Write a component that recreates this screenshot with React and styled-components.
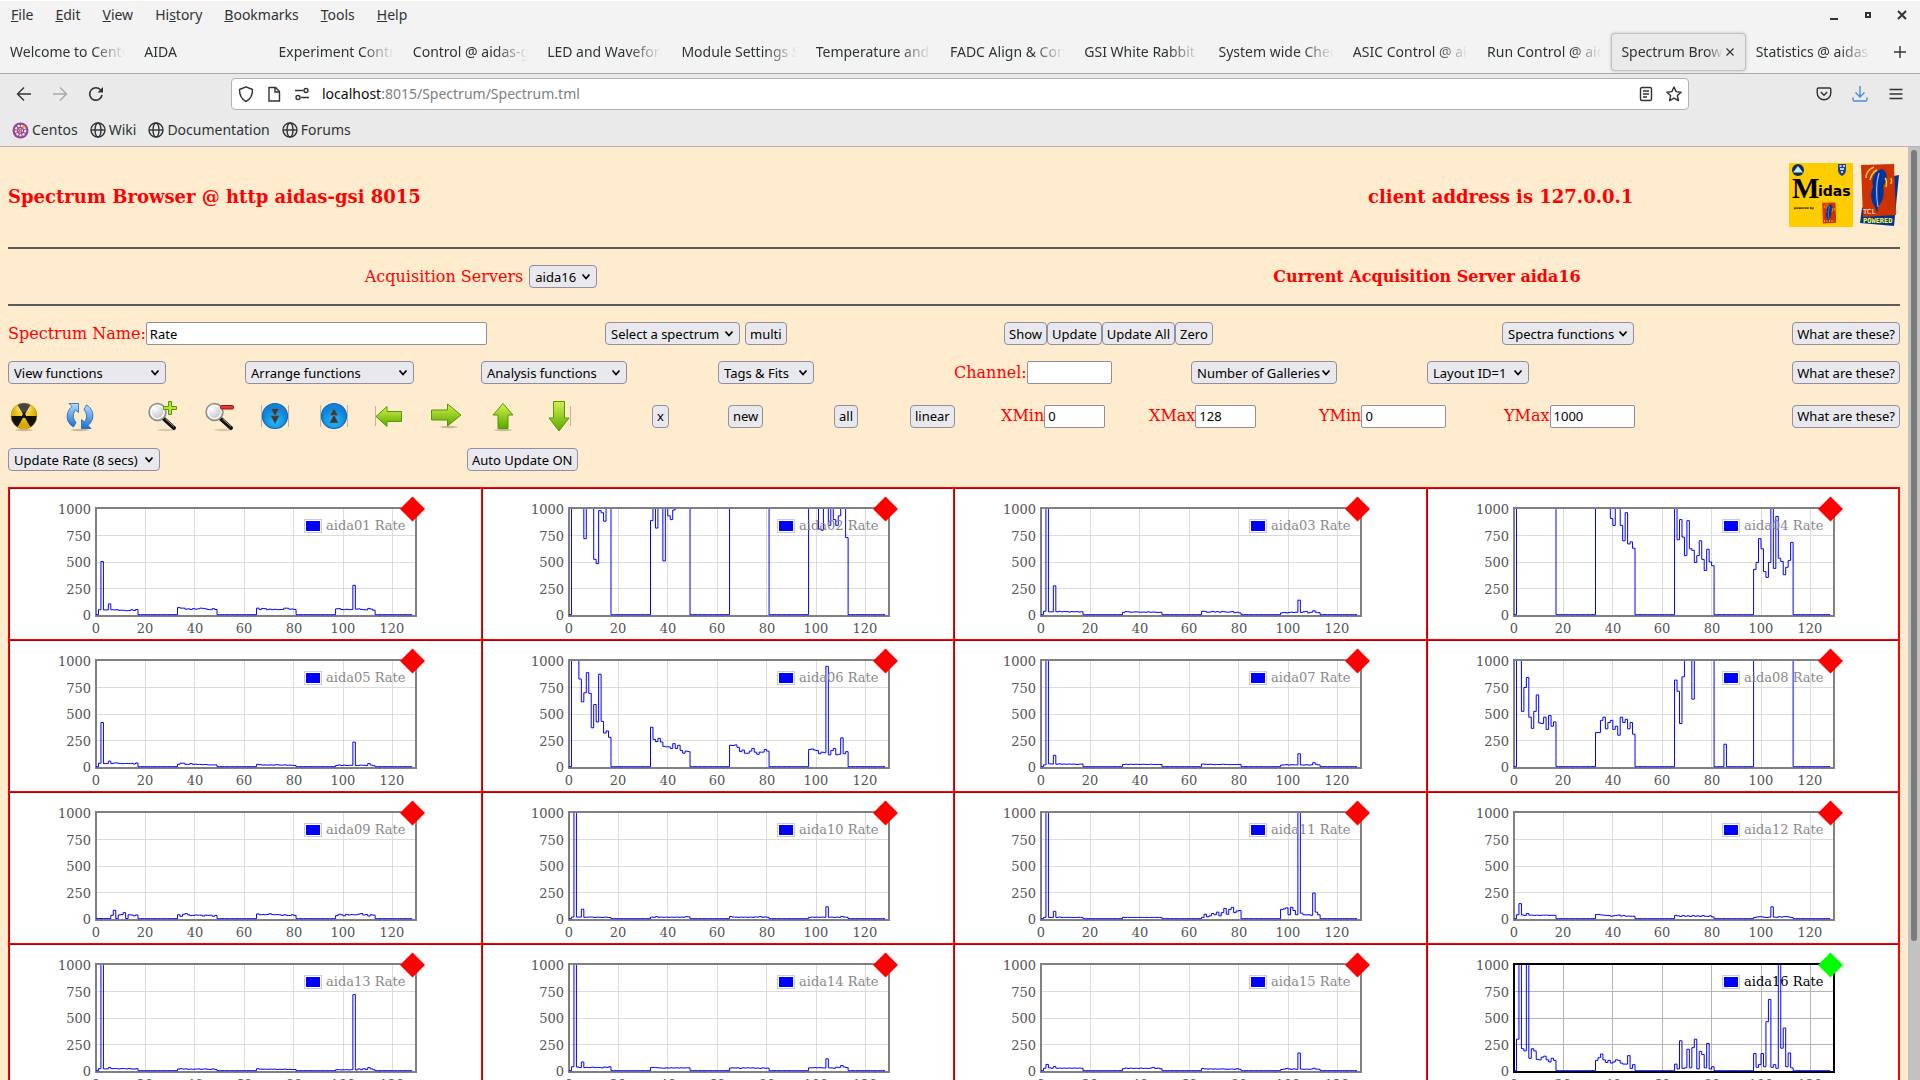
import { useState } from "react";
import styled, { createGlobalStyle, css } from "styled-components";

const UI_FONT = `"Noto Sans", "Open Sans", sans-serif`;
const PAGE_FONT = `"DejaVu Serif", serif`;

const GlobalStyle = createGlobalStyle`
  * {
    box-sizing: border-box;
  }
  body {
    margin: 0;
    overflow: hidden;
    font-family: ${UI_FONT};
    font-size: 14px;
    color: #2e3436;
  }
`;

const Window = styled.div`
  display: flex;
  flex-direction: column;
  height: 100vh;
  background: #f3f3f3;
  border-top: 1px solid #fff;
`;

/* ---------- browser chrome ---------- */

const MenuBar = styled.nav`
  display: flex;
  align-items: center;
  justify-content: space-between;
  height: 28px;
  padding: 0 10px 0 11px;
`;

const MenuList = styled.div`
  display: flex;
  gap: 22px;
`;

const MenuItem = styled.button`
  border: 0;
  padding: 0;
  background: none;
  font: inherit;
  line-height: 20px;
  color: inherit;
`;

const WindowButtons = styled.div`
  display: flex;
  gap: 18px;
`;

const IconButton = styled.button`
  display: flex;
  align-items: center;
  justify-content: center;
  border: 0;
  padding: 0;
  background: none;
  color: ${(props) => props.$color || "#2e3436"};
`;

const TabBar = styled.div`
  display: flex;
  align-items: center;
  height: 45px;
  padding-top: 1px;
  border-bottom: 1px solid #a9a9a9;
`;

const Tab = styled.div`
  flex: 1 1 0;
  min-width: 0;
  height: 38px;
  display: flex;
  align-items: center;
  padding: 0 9px 0 10px;
  border-radius: 4px;
  ${(props) =>
    props.$active &&
    css`
      background: #eaeaea;
      box-shadow: inset 0 0 0 1px #c0c0c8, 0 0 3px rgba(0, 0, 0, 0.25);
    `}
`;

const TabTitle = styled.span`
  flex: 1;
  min-width: 0;
  overflow: hidden;
  white-space: nowrap;
  line-height: 20px;
  mask-image: linear-gradient(to left, transparent, #000 ${(props) => (props.$active ? 16 : 32)}px);
`;

const NewTab = styled.div`
  width: 40px;
  display: flex;
  justify-content: center;
`;

const NavBar = styled.div`
  display: grid;
  grid-template-columns: 231fr 1458fr 231fr;
  align-items: center;
  height: 40px;
  background: #eaeaea;
`;

const NavGroup = styled.div`
  display: flex;
  align-items: center;
  gap: 20px;
  padding: 0 16px;
  justify-content: ${(props) => props.$align || "flex-start"};
`;

const AddressBox = styled.div`
  display: flex;
  align-items: center;
  gap: 12px;
  height: 32px;
  padding: 0 6px;
  background: #fff;
  border: 1px solid #b3b3b3;
  border-radius: 4px;
`;

const Address = styled.div`
  flex: 1;
  line-height: 20px;
  color: #808080;

  b {
    font-weight: 400;
    color: #0c0c0d;
  }
`;

const BookmarkBar = styled.div`
  display: flex;
  align-items: center;
  gap: 12px;
  height: 33px;
  padding: 0 12px;
  background: #eaeaea;
  border-bottom: 1px solid #b3b3b3;
`;

const Bookmark = styled.a`
  display: flex;
  align-items: center;
  gap: 3px;
  line-height: 20px;
  color: inherit;
  text-decoration: none;
`;

/* ---------- page ---------- */

const Viewport = styled.div`
  flex: 1;
  min-height: 0;
  display: flex;
`;

const Page = styled.main`
  flex: 1;
  min-width: 0;
  overflow: hidden;
  padding: 0 8px;
  background: #ffebcd;
  color: #f00;
  font-family: ${PAGE_FONT};
  font-size: 16px;
`;

const ScrollTrack = styled.div`
  width: 12px;
  padding: 3px 3px 0;
  background: #c2c2c2;
`;

const ScrollThumb = styled.div`
  height: 85%;
  border-radius: 3px;
  background: #7b7b7b;
`;

const Header = styled.header`
  display: grid;
  grid-template-columns: 1360fr 532fr;
  align-items: center;
  height: 100px;
`;

const HeaderRight = styled.div`
  display: flex;
  align-items: center;
  justify-content: space-between;
`;

const Title = styled.h3`
  margin: 0;
  font-size: 18px;
  line-height: 24px;
`;

const ServerTitle = styled.h4`
  margin: 0;
  font-size: 16px;
  line-height: 20px;
`;

const Logos = styled.div`
  display: flex;
  gap: 5px;
  padding-bottom: 4px;
`;

const Rule = styled.hr`
  margin: 0;
  border: 0;
  height: 2px;
  background: #5a5a5a;
`;

const ServerRow = styled.div`
  display: grid;
  grid-template-columns: 1fr 1fr;
  align-items: center;
  justify-items: center;
  height: 55px;
`;

const Form = styled.form`
  display: flex;
  flex-direction: column;
  gap: 16px;
  padding: 16px 0;
`;

const Row = styled.div`
  display: grid;
  grid-template-columns: ${(props) => props.$columns};
  align-items: center;
`;

const Group = styled.div`
  display: flex;
  align-items: center;
  gap: ${(props) => props.$gap || 0}px;
  min-width: 0;
`;

const Label = styled.label`
  display: flex;
  align-items: center;
  gap: ${(props) => props.$gap || 0}px;
  line-height: 20px;
  white-space: nowrap;
`;

const control = css`
  height: 23px;
  border: 1px solid #8f8f9d;
  font-family: ${UI_FONT};
  font-size: 13px;
  color: #000;
`;

const Button = styled.button`
  ${control}
  padding: 0 4px;
  border-radius: 4px;
  background: #e9e9ed;
  white-space: nowrap;
  justify-self: ${(props) => props.$align || "start"};
`;

const ToolButton = styled(IconButton)`
  height: 32px;
  justify-self: start;
`;

const Select = styled.select`
  ${control}
  width: ${(props) => props.$width}px;
  padding: 0 16px 0 5px;
  border-radius: 4px;
  appearance: none;
  background: #e9e9ed
    url("data:image/svg+xml,%3Csvg xmlns='http://www.w3.org/2000/svg' width='10' height='8'%3E%3Cpath d='M1.5 1.5 5 5.5 8.5 1.5' fill='none' stroke='black' stroke-width='1.7'/%3E%3C/svg%3E")
    no-repeat right 5px center;
`;

const TextInput = styled.input`
  ${control}
  width: ${(props) => props.$width}px;
  padding: 0 3px;
  border-radius: 2px;
  background: #fff;
`;

const Gallery = styled.div`
  display: grid;
  grid-template-columns: repeat(4, minmax(0, 1fr));
  gap: 2px;
  padding: 2px;
  background: #f00;
`;

const Cell = styled.div`
  height: 150px;
  background: #fff;
  box-shadow: -1px -1px 0 #b40000;

  svg {
    display: block;
  }
`;

/* ---------- spectra ---------- */

const flat = (value, count = 16) => Array(count).fill(value);
const OVER = 1300;

// each block is the 16 channels starting at 1, 33, 65 and 97
const SPECTRA = [
  [
    [50, 505, 48, 48, 105, 50, 48, 50, 44, 46, 44, 40, 42, 50, 42, 52],
    [70, 65, 65, 55, 58, 52, 60, 55, 58, 65, 62, 58, 52, 50, 60, 52],
    [65, 52, 62, 60, 50, 55, 50, 54, 50, 52, 52, 64, 64, 55, 57, 52],
    [58, 60, 52, 50, 54, 50, 52, 280, 55, 58, 52, 50, 48, 62, 55, 45],
  ],
  [
    [...flat(OVER, 5), 720, OVER, OVER, OVER, 525, 485, 985, 965, 885, OVER, OVER],
    [890, OVER, 820, OVER, OVER, 510, OVER, 935, 900, 990, ...flat(OVER, 6)],
    flat(OVER),
    [...flat(OVER, 4), 810, 800, OVER, OVER, 845, OVER, 900, 845, 935, OVER, OVER, 730],
  ],
  [
    [35, OVER, 30, 30, 275, 30, 35, 30, 34, 32, 28, 32, 30, 32, 28, 30],
    [25, 32, 30, 26, 28, 30, 28, 26, 28, 26, 30, 26, 28, 26, 24, 26],
    [35, 34, 26, 28, 34, 28, 32, 26, 34, 30, 26, 28, 34, 22, 26, 20],
    [20, 24, 20, 24, 26, 24, 26, 140, 24, 30, 34, 20, 26, 40, 26, 22],
  ],
  [
    flat(OVER),
    [...flat(OVER, 6), 910, 845, OVER, OVER, 845, 700, 965, 670, 690, 630],
    [OVER, 710, 900, 735, 560, 890, 625, 610, 495, 560, 700, 525, 420, 620, 500, 465],
    [430, 495, 720, 625, 410, 355, 495, OVER, 440, 930, 535, 505, 380, 450, 515, 685],
  ],
  [
    [35, 420, 32, 32, 55, 32, 38, 38, 34, 32, 32, 34, 32, 34, 28, 38],
    [26, 35, 36, 25, 25, 32, 25, 27, 24, 24, 22, 24, 20, 20, 20, 20],
    [25, 22, 18, 20, 18, 20, 18, 20, 22, 18, 18, 20, 16, 18, 16, 14],
    [14, 20, 14, 18, 14, 16, 16, 235, 14, 16, 18, 16, 14, 32, 18, 12],
  ],
  [
    [OVER, OVER, OVER, 830, 615, 700, 890, 695, 370, 590, 425, 875, 430, 320, 340, 280],
    [375, 260, 240, 270, 235, 195, 190, 190, 175, 220, 175, 205, 155, 130, 150, 145],
    [205, 203, 208, 185, 145, 160, 130, 130, 150, 175, 140, 120, 140, 140, 165, 150],
    [165, 170, 160, 155, 125, 140, 135, 950, 115, 155, 175, 115, 120, 275, 125, 145],
  ],
  [
    [20, OVER, 30, 28, 110, 26, 30, 26, 28, 26, 28, 26, 28, 24, 26, 28],
    [24, 26, 24, 26, 24, 26, 24, 24, 26, 24, 24, 26, 24, 24, 24, 24],
    [28, 26, 24, 26, 24, 22, 24, 24, 26, 24, 24, 22, 24, 22, 24, 24],
    [18, 20, 22, 18, 22, 20, 20, 125, 20, 18, 22, 18, 20, 40, 26, 20],
  ],
  [
    [OVER, OVER, 525, 750, 845, 470, 365, 525, 680, 415, 410, 470, 355, 485, 385, 425],
    [325, 325, 440, 470, 360, 420, 440, 355, 385, 300, 470, 420, 450, 360, 420, 310],
    [820, 715, 410, 850, OVER, OVER, OVER, 640, ...flat(OVER, 8)],
    flat(OVER),
  ],
  [
    [4, 4, 4, 4, 4, 35, 82, 4, 38, 42, 60, 4, 40, 38, 30, 38],
    [40, 25, 45, 50, 40, 32, 34, 38, 36, 36, 28, 36, 34, 36, 26, 34],
    [48, 40, 42, 40, 42, 50, 42, 40, 42, 40, 34, 40, 34, 32, 40, 34],
    [32, 44, 40, 30, 44, 38, 42, 40, 40, 46, 52, 38, 42, 28, 40, 36],
  ],
  [
    [18, OVER, 18, 18, 92, 16, 18, 18, 18, 14, 18, 16, 14, 18, 16, 14],
    [18, 16, 22, 16, 18, 16, 18, 16, 18, 16, 18, 16, 18, 16, 22, 20],
    [24, 18, 18, 16, 18, 16, 18, 16, 18, 16, 20, 18, 24, 16, 20, 16],
    [16, 18, 16, 18, 16, 18, 16, 115, 16, 18, 14, 18, 16, 24, 18, 16],
  ],
  [
    [15, OVER, 15, 15, 72, 15, 18, 15, 15, 16, 15, 15, 14, 15, 16, 15],
    flat(15),
    [15, 45, 20, 30, 52, 40, 65, 30, 60, 100, 45, 90, 110, 60, 75, 80],
    [90, 95, 105, 40, 110, 80, 40, OVER, 55, 40, 38, 40, 35, 245, 65, 40],
  ],
  [
    [40, 145, 38, 34, 52, 36, 36, 34, 36, 34, 36, 36, 36, 34, 36, 34],
    [42, 42, 38, 36, 34, 34, 26, 30, 34, 38, 28, 32, 26, 28, 26, 26],
    [34, 30, 24, 32, 26, 30, 24, 32, 26, 30, 24, 32, 26, 24, 30, 20],
    [14, 18, 22, 20, 16, 14, 18, 115, 18, 16, 22, 18, 22, 24, 18, 14],
  ],
  [
    [22, OVER, 20, 20, 32, 22, 24, 22, 20, 24, 22, 20, 24, 20, 18, 22],
    [18, 22, 18, 20, 16, 18, 16, 18, 20, 16, 18, 20, 16, 14, 20, 14],
    [22, 18, 16, 18, 16, 18, 16, 18, 14, 16, 14, 18, 14, 16, 14, 14],
    [12, 12, 10, 12, 12, 10, 12, 720, 10, 20, 12, 22, 14, 32, 20, 12],
  ],
  [
    [40, OVER, 38, 32, 85, 32, 34, 32, 36, 32, 34, 32, 30, 38, 34, 40],
    [32, 34, 32, 30, 28, 26, 30, 28, 30, 28, 30, 28, 30, 28, 30, 30],
    [28, 30, 28, 30, 24, 30, 28, 30, 28, 30, 26, 28, 24, 30, 26, 28],
    [30, 30, 32, 30, 32, 30, 28, 115, 30, 28, 26, 36, 32, 52, 38, 32],
  ],
  [
    [26, 62, 30, 26, 42, 26, 28, 26, 28, 26, 28, 26, 28, 26, 28, 26],
    [22, 28, 24, 28, 24, 26, 24, 28, 24, 26, 24, 28, 34, 24, 28, 22],
    [24, 20, 18, 20, 18, 20, 18, 18, 20, 18, 16, 18, 18, 16, 22, 16],
    [14, 18, 24, 20, 16, 20, 16, 170, 18, 16, 18, 16, 18, 26, 18, 16],
  ],
  [
    [300, OVER, 210, 190, OVER, 120, 210, 190, 110, 105, 130, 140, 105, 85, 120, 100],
    [100, 125, 160, 105, 80, 100, 75, 85, 105, 100, 75, 65, 65, 145, 25, 60],
    [65, 20, 285, 25, 30, 205, 30, 220, 300, 20, 185, 155, 30, 260, 20, 40],
    [165, 35, 60, 165, 40, 465, 675, 35, 60, 25, OVER, 215, 405, 40, 170, 30],
  ],
];

const PLOT = { left: 86, top: 20, bottom: 126, step: 2.47 };

const toX = (channel) => PLOT.left + channel * PLOT.step;
const toY = (value) => PLOT.bottom - value * 0.106;

const buildPath = (blocks, index) => {
  const bins = flat(3, 128);
  blocks.forEach((block, b) => {
    block.forEach((value, i) => {
      bins[b * 32 + 1 + i] = value;
    });
  });
  if (index === 7) bins[85] = 215;
  let d = `M${toX(0)} ${toY(bins[0])}`;
  bins.forEach((value, i) => {
    d += `V${toY(value)}H${toX(i + 1)}`;
  });
  return d;
};

const Spectrum = ({ index, active }) => {
  const name = `aida${String(index + 1).padStart(2, "0")} Rate`;
  const grid = active ? "#b4b4b4" : "#dcdcdc";
  const clip = `plot-${index}`;

  return (
    <svg width="430" height="150" fontFamily="DejaVu Serif" fontSize="13">
      <clipPath id={clip}>
        <rect x="86" y="20" width="320" height="108" />
      </clipPath>
      <g stroke={grid} shapeRendering="crispEdges">
        {[20, 40, 60, 80, 100, 120].map((x) => (
          <line key={x} x1={toX(x)} x2={toX(x)} y1="20" y2="127" />
        ))}
        {[250, 500, 750].map((y) => (
          <line key={y} x1="86" x2="406" y1={toY(y)} y2={toY(y)} />
        ))}
      </g>
      <rect x="86" y="19" width="320" height="108" fill="none" strokeWidth="2" stroke={active ? "#000" : "#808080"} />
      <path d={buildPath(SPECTRA[index], index)} clipPath={`url(#${clip})`} fill="none" stroke="#00f" strokeWidth="1" />
      <g fill="#545454" textAnchor="end">
        {[0, 250, 500, 750, 1000].map((y) => (
          <text key={y} x="81" y={Math.round(toY(y)) + 5}>{y}</text>
        ))}
      </g>
      <g fill="#545454" textAnchor="middle">
        {[0, 20, 40, 60, 80, 100, 120].map((x) => (
          <text key={x} x={Math.round(toX(x))} y="144">{x}</text>
        ))}
      </g>
      <rect x="294.5" y="30.5" width="17" height="13" fill="#fff" stroke="#ccc" />
      <rect x="296" y="32" width="14" height="10" fill="#00f" />
      <text x="316" y="41" fill={active ? "#000" : "#888"}>{name}</text>
      <path d="M402.500 7.500l12.500 12.500-12.500 12.500-12.500-12.500z" fill={active ? "#0f0" : "#f00"} />
    </svg>
  );
};

/* ---------- icons ---------- */

const Line = ({ size = 16, width = 1.4, children }) => (
  <svg width={size} height={size} viewBox="0 0 16 16" fill="none" stroke="currentColor" strokeWidth={width}>
    {children}
  </svg>
);

const Globe = () => (
  <Line>
    <circle cx="8" cy="8" r="7" />
    <ellipse cx="8" cy="8" rx="3" ry="7" />
    <path d="M1 8h14" />
  </Line>
);

const CentosIcon = () => (
  <svg width="17" height="17" viewBox="0 0 17 17">
    <circle cx="8.500" cy="8.500" r="8" fill="#9b4393" />
    <circle cx="8.500" cy="8.500" r="4.800" fill="none" stroke="#fff" strokeWidth="2" strokeDasharray="2 1.200" />
    <circle cx="8.500" cy="8.500" r="2" fill="none" stroke="#fff" strokeDasharray="1.500 1" />
    <circle cx="11.500" cy="5" r="1.400" fill="#f5a623" />
    <circle cx="8.500" cy="8.500" r="1" fill="#f5a623" />
  </svg>
);

const ToolIcon = ({ children }) => (
  <svg width="32" height="32" viewBox="0 2 32 32">
    {children}
  </svg>
);

const GradientDefs = styled.svg`
  position: absolute;
`;

const Gradients = () => (
  <GradientDefs width="0" height="0">
    <linearGradient id="green" x2="0" y2="1">
      <stop offset="0" stopColor="#d4f04c" />
      <stop offset="1" stopColor="#5aa800" />
    </linearGradient>
    <linearGradient id="blue" x2="0" y2="1">
      <stop offset="0" stopColor="#b4dcff" />
      <stop offset="1" stopColor="#1d6fd0" />
    </linearGradient>
    <radialGradient id="disc" cy="0.700">
      <stop offset="0" stopColor="#22c0ff" />
      <stop offset="1" stopColor="#0c83dd" />
    </radialGradient>
    <radialGradient id="glass" cx="0.350" cy="0.300">
      <stop offset="0" stopColor="#fff" />
      <stop offset="1" stopColor="#cfcfd6" />
    </radialGradient>
    <radialGradient id="yellow" cy="0.300">
      <stop offset="0" stopColor="#ffe94a" />
      <stop offset="1" stopColor="#d9a800" />
    </radialGradient>
  </GradientDefs>
);

const Shadow = ({ cx = 16, cy = 32, rx = 9 }) => (
  <ellipse cx={cx} cy={cy} rx={rx} ry="1.200" fill="#000" opacity="0.220" />
);

// three yellow blades: upper left, upper right and bottom
const Radiation = () => (
  <ToolIcon>
    <Shadow />
    <circle cx="16" cy="18" r="13" fill="#111" stroke="#c9a227" strokeWidth="0.600" />
    <path
      d="M16 18H3A13 13 0 0 1 9.500 6.700zM16 18 22.500 6.700A13 13 0 0 1 29 18zM16 18 22.500 29.300a13 13 0 0 1-13 0z"
      fill="url(#yellow)"
    />
    <circle cx="16" cy="18" r="2" fill="#111" />
    <ellipse cx="16" cy="10" rx="9" ry="4.500" fill="#fff" opacity="0.220" />
  </ToolIcon>
);

const Refresh = () => (
  <ToolIcon>
    <Shadow />
    <g fill="url(#blue)" stroke="#1b5fae" strokeWidth="0.800" strokeLinejoin="round">
      <path d="M5 5.500h9.500v9l-3-2.500c-3 4-3 8 .500 12.500l-2.500 4.500C1 24 1.500 14 8 8.500z" />
      <path d="M27 30.500h-9.500v-9l3 2.500c3-4 3-8-.500-12.500l2.500-4.500C31 12 30.500 22 24 27.500z" />
    </g>
  </ToolIcon>
);

const Magnifier = ({ minus }) => (
  <ToolIcon>
    <ellipse cx="20" cy="32" rx="9" ry="1.200" fill="#000" opacity="0.150" />
    <path d="M18 21 28 30" stroke="#111" strokeWidth="4" strokeLinecap="round" />
    <path d="M19.500 21 28 28.500" stroke="#999" strokeWidth="1" />
    <circle cx="11.500" cy="14" r="8.500" fill="url(#glass)" stroke="#8c8c8c" strokeWidth="1.500" />
    <circle cx="11.500" cy="14" r="6.500" fill="none" stroke="#fff" strokeWidth="1.200" />
    {minus ? (
      <rect x="17.500" y="7.500" width="13" height="3.500" rx="1" fill="#e03a3a" stroke="#a00f0f" />
    ) : (
      <path d="M22.500 3.500h3v5h5v3h-5v5h-3v-5h-5v-3h5z" fill="#b6e234" stroke="#4f9a00" />
    )}
  </ToolIcon>
);

const DoubleArrow = ({ up }) => (
  <ToolIcon>
    <path d="M2.500 7v22M29.500 7v22" stroke="#8b7b66" strokeWidth="1" opacity="0.500" />
    <circle cx="16" cy="18" r="12.500" fill="url(#disc)" stroke="#1266b5" strokeWidth="1.200" />
    <path
      d={up ? "M16 10l4 7.500h-8zM16 16.500l4.500 8.500h-9z" : "M16 18.500l-4-8h8zM16 26l-4.500-8.500h9z"}
      fill="#3a3a3a"
      stroke="#5a7f99"
      strokeWidth="0.600"
    />
  </ToolIcon>
);

const GreenArrow = ({ d, shadow }) => (
  <ToolIcon>
    {shadow}
    <path d={d} fill="url(#green)" stroke="#4f9a00" strokeWidth="1" strokeLinejoin="round" />
  </ToolIcon>
);

const sideShadow = (x) => <path d={`M${x} 8v20`} stroke="#8b7b66" opacity="0.500" />;

const TOOLS = [
  { name: "Reset", icon: <Radiation /> },
  { name: "Refresh", icon: <Refresh /> },
  { name: "Zoom in", icon: <Magnifier /> },
  { name: "Zoom out", icon: <Magnifier minus /> },
  { name: "Compress", icon: <DoubleArrow /> },
  { name: "Expand", icon: <DoubleArrow up /> },
  { name: "Left", icon: <GreenArrow d="M3 18.500 14 8.500v5h14.500v10H14v5z" shadow={sideShadow(2.5)} /> },
  { name: "Right", icon: <GreenArrow d="M31 17 17.500 6v6H1.500v10h16v6z" shadow={<Shadow cx={19} cy={29} />} /> },
  { name: "Up", icon: <GreenArrow d="M16 5.500 26 17h-5v13.500H11V17H6z" shadow={<Shadow />} /> },
  { name: "Down", icon: <GreenArrow d="M16 33 26 20h-4.500V3.500h-11V20H6z" shadow={sideShadow(27.5)} /> },
];

const Feather = () => (
  <g>
    <path d="M3 2 36 1l2 51-33 2z" fill="#cc3300" />
    <path d="M24 6c-8 2-11 10-9 18-4 8-1 16 2 20l2 6 1-6c7-8 6-16 5-21 5-6 5-14-1-17z" fill="#003399" />
    <path d="M21 10c-3 10-3 22-1 34" fill="none" stroke="#9cc0ff" strokeWidth="1.200" />
    <path d="M8 15c0-5 3-9 8-11M12 17c1-5 3-8 7-10M28 24c1-5 1-7-1-9M33 21c1-3 1-4 0-6" fill="none" stroke="#ffcc33" strokeWidth="1.500" />
  </g>
);

const MidasLogo = () => (
  <svg width="64" height="64" viewBox="0 0 64 64">
    <rect width="64" height="64" fill="#fc0" />
    <circle cx="9" cy="7" r="6" fill="#0b2f5b" />
    <path d="M4 9.500 9 3l5 6.500z" fill="#cfe3f2" />
    <path d="M49 1h8v6c0 3-2 5-4 6-2-1-4-3-4-6z" fill="#1e3f9c" />
    <path d="M50.500 3h2M54 3h2M51 6h4M52 9h2" stroke="#fff" strokeWidth="1.300" />
    <text x="3" y="35" fontFamily="Liberation Serif" fontWeight="700" fontSize="29">M</text>
    <text x="29" y="33" fontFamily="DejaVu Sans" fontWeight="700" fontSize="14">idas</text>
    <text x="5" y="46" fontFamily="DejaVu Sans" fontWeight="700" fontSize="3">powered by</text>
    <g transform="translate(32 39) scale(0.400)">
      <Feather />
    </g>
    <path d="M35 58h10" stroke="#ffd" strokeDasharray="1 1.500" />
  </svg>
);

const TclLogo = () => (
  <svg width="42" height="64" viewBox="0 0 42 64">
    <path d="M36 13l5-1-5 51-34-3 2-15z" fill="#003399" />
    <Feather />
    <text x="5" y="51" fontFamily="DejaVu Sans" fontSize="7" fill="#fff">TCL</text>
    <text x="5" y="60" fontFamily="DejaVu Sans Mono" fontWeight="700" fontSize="7" fill="#ffff33">POWERED</text>
  </svg>
);

/* ---------- data ---------- */

// the access key of each menu is the letter at "key"
const MENUS = [
  { name: "File", key: 0 },
  { name: "Edit", key: 0 },
  { name: "View", key: 0 },
  { name: "History", key: 2 },
  { name: "Bookmarks", key: 0 },
  { name: "Tools", key: 0 },
  { name: "Help", key: 0 },
];

const TABS = [
  "Welcome to CentOS",
  "AIDA",
  "Experiment Control @",
  "Control @ aidas-gsi",
  "LED and Waveform",
  "Module Settings Set",
  "Temperature and st",
  "FADC Align & Control",
  "GSI White Rabbit Ti",
  "System wide Checks",
  "ASIC Control @ aidas",
  "Run Control @ aidas",
  "Spectrum Browser",
  "Statistics @ aidas-gsi",
];

const Picker = ({ label, width }) => (
  <Select $width={width} aria-label={label}>
    <option>{label}</option>
  </Select>
);

const Field = ({ label, width, initial = "" }) => {
  const [value, setValue] = useState(initial);
  return (
    <Label>
      {label}
      <TextInput $width={width} value={value} onChange={(e) => setValue(e.target.value)} />
    </Label>
  );
};

const HelpButton = () => <Button type="button" $align="end">What are these?</Button>;

const BrowserChrome = () => (
  <>
    <MenuBar>
      <MenuList>
        {MENUS.map(({ name, key }) => (
          <MenuItem key={name}>
            {name.slice(0, key)}
            <u>{name[key]}</u>
            {name.slice(key + 1)}
          </MenuItem>
        ))}
      </MenuList>
      <WindowButtons>
        <IconButton aria-label="Minimise">
          <Line width={2}><path d="M4 12h8" /></Line>
        </IconButton>
        <IconButton aria-label="Maximise">
          <Line width={2}><path d="M6 6h4v4H6z" /></Line>
        </IconButton>
        <IconButton aria-label="Close">
          <Line width={2}><path d="M4 4l8 8M12 4l-8 8" /></Line>
        </IconButton>
      </WindowButtons>
    </MenuBar>
    <TabBar>
      {TABS.map((tab) => {
        const active = tab === "Spectrum Browser";
        return (
          <Tab key={tab} $active={active}>
            <TabTitle $active={active}>{tab}</TabTitle>
            {active && (
              <IconButton aria-label="Close tab">
                <Line size={14}><path d="M4 4l8 8M12 4l-8 8" /></Line>
              </IconButton>
            )}
          </Tab>
        );
      })}
      <NewTab>
        <IconButton aria-label="New tab">
          <Line><path d="M8 2v12M2 8h12" /></Line>
        </IconButton>
      </NewTab>
    </TabBar>
    <NavBar>
      <NavGroup>
        <IconButton aria-label="Back">
          <Line><path d="M15 8H1.500M8 1.500 1.500 8 8 14.500" /></Line>
        </IconButton>
        <IconButton aria-label="Forward" $color="#a6a8a8">
          <Line><path d="M1 8h13.500M8 1.500 14.500 8 8 14.500" /></Line>
        </IconButton>
        <IconButton aria-label="Reload">
          <Line width={1.6}>
            <path d="M14 9A6.200 6.200 0 1 1 12.500 3.800" />
            <path d="M15 1v5.500H9.500z" fill="currentColor" stroke="none" />
          </Line>
        </IconButton>
      </NavGroup>
      <AddressBox>
        <Line><path d="M8 .800 14.500 3.500c0 5.500-1.500 9.500-6.500 12C3 13 1.500 9 1.500 3.500z" strokeLinejoin="round" /></Line>
        <Line><path d="M3 1.500h6.500L13.500 5.500v9.500H3zM9 1.500V6h4.500" /></Line>
        <Line>
          <path d="M1 4.500h8M7 11.500h8" />
          <circle cx="12" cy="4.500" r="2" />
          <circle cx="4" cy="11.500" r="2" />
        </Line>
        <Address><b>localhost</b>:8015/Spectrum/Spectrum.tml</Address>
        <IconButton aria-label="Reader view">
          <Line><rect x="2.500" y="1.500" width="11" height="13" rx="1.500" /><path d="M5 5h6M5 8h6M5 11h4" /></Line>
        </IconButton>
        <IconButton aria-label="Bookmark this page">
          <Line><path d="M8 1l2.100 4.600 5 .600-3.700 3.400 1 5L8 12.100l-4.400 2.500 1-5L.900 6.200l5-.600z" strokeLinejoin="round" /></Line>
        </IconButton>
      </AddressBox>
      <NavGroup $align="flex-end">
        <IconButton aria-label="Pocket">
          <Line><path d="M2.500 2h11q1.300 0 1.300 1.300V7a6.800 6.800 0 0 1-13.600 0V3.300Q1.200 2 2.500 2zM4.800 6 8 9.200 11.200 6" /></Line>
        </IconButton>
        <IconButton aria-label="Downloads" $color="#4a90d9">
          <Line><path d="M8 0v11M3.500 6.500 8 11l4.500-4.500M1 11.500v2q0 1.500 1.500 1.500h11q1.500 0 1.500-1.500v-2" /></Line>
        </IconButton>
        <IconButton aria-label="Menu">
          <Line><path d="M1.500 3.500h13M1.500 8h13M1.500 12.500h13" /></Line>
        </IconButton>
      </NavGroup>
    </NavBar>
    <BookmarkBar>
      <Bookmark href="#centos"><CentosIcon />Centos</Bookmark>
      <Bookmark href="#wiki"><Globe />Wiki</Bookmark>
      <Bookmark href="#documentation"><Globe />Documentation</Bookmark>
      <Bookmark href="#forums"><Globe />Forums</Bookmark>
    </BookmarkBar>
  </>
);

const App = () => (
  <Window>
    <GlobalStyle />
    <Gradients />
    <BrowserChrome />
    <Viewport>
      <Page>
        <Header>
          <Title>Spectrum Browser @ http aidas-gsi 8015</Title>
          <HeaderRight>
            <Title>client address is 127.0.0.1</Title>
            <Logos>
              <MidasLogo />
              <TclLogo />
            </Logos>
          </HeaderRight>
        </Header>
        <Rule />
        <ServerRow>
          <Label $gap={6}>
            Acquisition Servers
            <Select $width={68}>
              <option>aida16</option>
            </Select>
          </Label>
          <ServerTitle>Current Acquisition Server aida16</ServerTitle>
        </ServerRow>
        <Rule />
        <Form onSubmit={(e) => e.preventDefault()}>
          <Row $columns="597fr 399fr 498fr 291fr 107px">
            <Field label="Spectrum Name:" width={341} initial="Rate" />
            <Group $gap={5}>
              <Picker label="Select a spectrum" width={135} />
              <Button type="button">multi</Button>
            </Group>
            <Group>
              <Button type="button">Show</Button>
              <Button type="button">Update</Button>
              <Button type="button">Update All</Button>
              <Button type="button">Zero</Button>
            </Group>
            <Picker label="Spectra functions" width={132} />
            <HelpButton />
          </Row>
          <Row $columns="237fr 236fr 237fr 236fr 237fr 236fr 366fr 107px">
            <Picker label="View functions" width={158} />
            <Picker label="Arrange functions" width={169} />
            <Picker label="Analysis functions" width={146} />
            <Picker label="Tags & Fits" width={96} />
            <Field label="Channel:" width={85} />
            <Picker label="Number of Galleries" width={146} />
            <Picker label="Layout ID=1" width={102} />
            <HelpButton />
          </Row>
          <Row $columns="56fr 82fr 57fr 56fr 59fr 55fr 57fr 57fr 56fr 109fr 76fr 106fr 76fr 91fr 148fr 170fr 185fr 289fr 107px">
            {TOOLS.map((tool) => (
              <ToolButton key={tool.name} type="button" aria-label={tool.name}>
                {tool.icon}
              </ToolButton>
            ))}
            <Button type="button">x</Button>
            <Button type="button">new</Button>
            <Button type="button">all</Button>
            <Button type="button">linear</Button>
            <Field label="XMin" width={61} initial="0" />
            <Field label="XMax" width={61} initial="128" />
            <Field label="YMin" width={85} initial="0" />
            <Field label="YMax" width={85} initial="1000" />
            <HelpButton />
          </Row>
          <Row $columns="459fr 1433fr">
            <Picker label="Update Rate (8 secs)" width={152} />
            <Button type="button">Auto Update ON</Button>
          </Row>
        </Form>
        <Gallery>
          {SPECTRA.map((_, i) => (
            <Cell key={i}>
              <Spectrum index={i} active={i === 15} />
            </Cell>
          ))}
        </Gallery>
      </Page>
      <ScrollTrack>
        <ScrollThumb />
      </ScrollTrack>
    </Viewport>
  </Window>
);

export default App;
